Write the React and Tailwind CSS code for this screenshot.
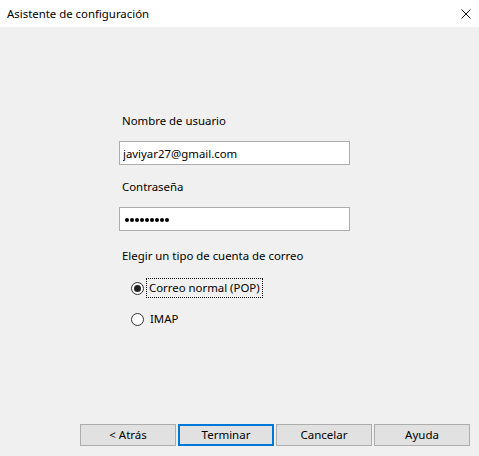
import React, { useState } from 'react';

const font = { fontFamily: '"Noto Sans", "Liberation Sans", sans-serif' };

const Radio = ({ checked, label, focused, onClick }) => (
  <div className="flex items-center h-[20px] pl-[12px] cursor-default" onClick={onClick}>
    <span className="w-[13px] h-[13px] rounded-full border border-[#333] bg-white flex items-center justify-center shrink-0">
      {checked && <span className="w-[7px] h-[7px] rounded-full bg-[#222]" />}
    </span>
    <span
      className={`ml-[3px] px-[2px] leading-[18px] ${focused ? 'outline outline-1 outline-dotted outline-black' : 'border border-transparent'}`}
    >
      {label}
    </span>
  </div>
);

const Button = ({ children, primary }) => (
  <button
    className={`w-[96px] h-[22px] bg-[#e1e1e1] text-black text-[11.5px] leading-none ${
      primary ? 'border-2 border-[#0078d7]' : 'border border-[#adadad]'
    }`}
  >
    {children}
  </button>
);

export default function App() {
  const [tipo, setTipo] = useState('pop');

  return (
    <div className="w-[479px] h-[456px] flex flex-col text-[11.4px] text-black" style={font}>
      {/* Title bar */}
      <div className="h-[27px] bg-white flex items-center justify-between pl-[7px] pr-[7px] shrink-0">
        <span className="text-[11.4px]">Asistente de configuración</span>
        <svg width="10" height="10" viewBox="0 0 10 10" className="mr-[1px]">
          <path d="M0.5 0.5 L9.5 9.5 M9.5 0.5 L0.5 9.5" stroke="#111" strokeWidth="1" />
        </svg>
      </div>

      {/* Body */}
      <div className="flex-1 bg-[#f0f0f0] flex flex-col">
        <div className="pt-[86px] pl-[119px] flex flex-col">
          <label className="pl-[3px] leading-[16px]">Nombre de usuario</label>
          <input
            className="mt-[12px] w-[231px] h-[24px] bg-white border border-[#adadad] px-[3px] text-[11.4px] outline-none"
            defaultValue="javiyar27@gmail.com"
            style={font}
          />
          <label className="pl-[3px] mt-[14px] leading-[16px]">Contraseña</label>
          <div className="mt-[12px] w-[231px] h-[24px] bg-white border border-[#adadad] pl-[5px] flex items-center">
            <div className="flex gap-[1px] mt-[1px]">
              {Array.from({ length: 9 }).map((_, i) => (
                <span key={i} className="w-[4px] h-[4px] rounded-full bg-black" />
              ))}
            </div>
          </div>
          <label className="pl-[3px] mt-[17px] leading-[16px]">Elegir un tipo de cuenta de correo</label>
          <div className="mt-[14px] flex flex-col gap-[11px]">
            <Radio checked={tipo === 'pop'} focused={tipo === 'pop'} label="Correo normal (POP)" onClick={() => setTipo('pop')} />
            <Radio checked={tipo === 'imap'} focused={tipo === 'imap'} label="IMAP" onClick={() => setTipo('imap')} />
          </div>
        </div>

        <div className="mt-auto flex justify-end gap-[2px] pr-[9px] pb-[10px]">
          <Button>&lt; Atrás</Button>
          <Button primary>Terminar</Button>
          <Button>Cancelar</Button>
          <Button>Ayuda</Button>
        </div>
      </div>
    </div>
  );
}
